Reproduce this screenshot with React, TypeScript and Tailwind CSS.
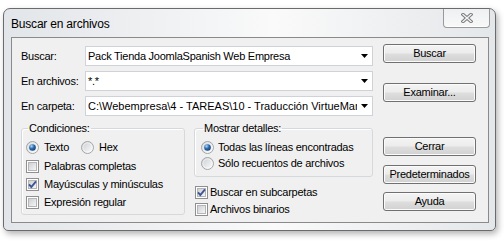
import React, { useId } from 'react';

const font = "font-['Liberation_Sans',Arial,sans-serif]";

const useSvgId = () => useId().replace(/[^a-zA-Z0-9]/g, '');

const Radio = ({ checked }: { checked?: boolean }) => {
  const id = useSvgId();
  return (
    <svg width="13" height="13" viewBox="0 0 13 13" className="shrink-0">
      <defs>
        <linearGradient id={`${id}r`} x1="0" y1="0" x2="1" y2="1">
          <stop offset="0" stopColor="#c9ccd0" />
          <stop offset="1" stopColor="#ffffff" />
        </linearGradient>
        <radialGradient id={`${id}d`} cx="0.35" cy="0.3" r="0.8">
          <stop offset="0" stopColor="#b7dcf7" />
          <stop offset="0.45" stopColor="#2f6fb2" />
          <stop offset="1" stopColor="#0d3a6e" />
        </radialGradient>
      </defs>
      <circle cx="6.5" cy="6.5" r="6" fill={`url(#${id}r)`} stroke="#a3a5a8" />
      <circle cx="6.5" cy="6.5" r="4.6" fill="none" stroke="#ffffff" strokeOpacity="0.5" />
      {checked && <circle cx="6.5" cy="6.5" r="3.3" fill={`url(#${id}d)`} />}
    </svg>
  );
};

const Check = ({ checked }: { checked?: boolean }) => {
  const id = useSvgId();
  return (
    <svg width="13" height="13" viewBox="0 0 13 13" className="shrink-0">
      <defs>
        <linearGradient id={`${id}c`} x1="0" y1="0" x2="1" y2="1">
          <stop offset="0" stopColor="#cbcdd0" />
          <stop offset="1" stopColor="#f8f8f8" />
        </linearGradient>
      </defs>
      <rect x="0.5" y="0.5" width="12" height="12" fill="#ffffff" stroke="#8f8f8f" />
      <rect x="2.5" y="2.5" width="8" height="8" fill={`url(#${id}c)`} stroke="#b3b5b8" />
      {checked && (
        <path d="M3 6.4 L5.3 9 L10 3.3" fill="none" stroke="#3f5695" strokeWidth="1.9" />
      )}
    </svg>
  );
};

const Combo = ({ value, wide }: { value: string; wide?: boolean }) => (
  <div className="flex h-[20px] w-[288px] items-center border border-[#cfd3d9] bg-white">
    <div className={`flex-1 overflow-hidden whitespace-nowrap pl-[2px] ${wide ? 'tracking-normal' : ''}`}>{value}</div>
    <div className="flex w-[15px] shrink-0 justify-center">
      <svg width="7" height="4" viewBox="0 0 7 4">
        <path d="M0 0H7L3.5 4Z" fill="#000" />
      </svg>
    </div>
  </div>
);

const Btn = ({ children, className = '' }: { children: React.ReactNode; className?: string }) => (
  <button
    className={`flex h-[19px] w-[93px] items-center justify-center rounded-[3px] border border-[#707070] bg-[linear-gradient(#f4f4f4,#ececec_48%,#dedede_52%,#d1d1d1)] shadow-[inset_0_0_0_1px_#fbfbfb] leading-none text-black ${className}`}
  >
    {children}
  </button>
);

const fields = [
  { label: 'Buscar:', value: 'Pack Tienda JoomlaSpanish Web Empresa' },
  { label: 'En archivos:', value: '*.*' },
  { label: 'En carpeta:', value: 'C:\\Webempresa\\4 - TAREAS\\10 - Traducción VirtueMart', wide: true },
];

export default function App() {
  return (
    <div className={`h-[241px] w-[504px] overflow-hidden bg-white pl-[3px] pt-[8px] ${font} text-[11px] tracking-[-0.25px] text-black`}>
      <div className="flex h-[223px] w-[493px] flex-col rounded-t-[7px] rounded-b-[5px] border border-[#6b6b6b] bg-[linear-gradient(90deg,#e2e5e9,#f5f6f7_45%,#fafafa_55%,#e4e7ea)] shadow-[2px_3px_6px_rgba(0,0,0,0.3)]">
        {/* Title bar */}
        <div className="flex h-[28px] shrink-0 items-start pl-[7px] pr-[5px]">
          <span className="mt-[8px] flex-1 text-[12px] leading-[14px] tracking-[-0.2px]">Buscar en archivos</span>
          <div className="flex h-[19px] w-[47px] items-center justify-center rounded-b-[4px] border border-t-0 border-[#9a9a9a] bg-[linear-gradient(#eef0f2,#f8f8f8)] shadow-[inset_0_-1px_0_#ffffff]">
            <svg width="12" height="10" viewBox="0 0 12 10">
              <path d="M2 1.5 L10 8.5 M10 1.5 L2 8.5" stroke="#7a7a7a" strokeWidth="3.4" strokeLinecap="square" />
              <path d="M2 1.5 L10 8.5 M10 1.5 L2 8.5" stroke="#f4f4f4" strokeWidth="1.4" strokeLinecap="square" />
            </svg>
          </div>
        </div>

        {/* Client area */}
        <div className="mb-[7px] ml-[7px] mr-[6px] flex flex-1 border border-[#8a8a8a] bg-[#f0f0f0] pl-[9px]">
          <div className="flex w-[352px] flex-col pt-[8px]">
            <div className="flex flex-col gap-[5px]">
              {fields.map((f) => (
                <div key={f.label} className="flex h-[20px] items-center">
                  <span className="w-[64px]">{f.label}</span>
                  <Combo value={f.value} wide={f.wide} />
                </div>
              ))}
            </div>

            <div className="mt-[6px] flex gap-[9px]">
              <fieldset className="h-[93px] w-[164px] rounded-[3px] border border-[#d5d9dc] pl-[4px] shadow-[inset_1px_1px_0_#ffffff]">
                <legend className="ml-[2px] px-[1px] leading-[13px]">Condiciones:</legend>
                <div className="mt-[3px] flex h-[19px] items-center">
                  <Radio checked />
                  <span className="ml-[5px]">Texto</span>
                  <span className="ml-[12px]">
                    <Radio />
                  </span>
                  <span className="ml-[5px]">Hex</span>
                </div>
                {[
                  { t: 'Palabras completas', c: false },
                  { t: 'Mayúsculas y minúsculas', c: true },
                  { t: 'Expresión regular', c: false },
                ].map((o) => (
                  <div key={o.t} className="flex h-[18px] items-center">
                    <Check checked={o.c} />
                    <span className="ml-[5px]">{o.t}</span>
                  </div>
                ))}
              </fieldset>

              <div className="flex flex-col">
                <fieldset className="h-[55px] w-[179px] rounded-[3px] border border-[#d5d9dc] pl-[6px] shadow-[inset_1px_1px_0_#ffffff]">
                  <legend className="ml-[2px] px-[1px] leading-[13px]">Mostrar detalles:</legend>
                  <div className="mt-[4px] flex h-[16px] items-center">
                    <Radio checked />
                    <span className="ml-[4px]">Todas las líneas encontradas</span>
                  </div>
                  <div className="flex h-[16px] items-center">
                    <Radio />
                    <span className="ml-[4px]">Sólo recuentos de archivos</span>
                  </div>
                </fieldset>
                <div className="mt-[7px] flex h-[17px] items-center pl-[1px]">
                  <Check checked />
                  <span className="ml-[2px]">Buscar en subcarpetas</span>
                </div>
                <div className="flex h-[17px] items-center pl-[1px]">
                  <Check />
                  <span className="ml-[2px]">Archivos binarios</span>
                </div>
              </div>
            </div>
          </div>

          <div className="ml-[10px] flex flex-col">
            <Btn className="mt-[6px]">Buscar</Btn>
            <Btn className="mt-[20px]">Examinar...</Btn>
            <Btn className="mt-[35px]">Cerrar</Btn>
            <Btn className="mt-[9px]">Predeterminados</Btn>
            <Btn className="mt-[8px]">Ayuda</Btn>
          </div>
        </div>
      </div>
    </div>
  );
}
